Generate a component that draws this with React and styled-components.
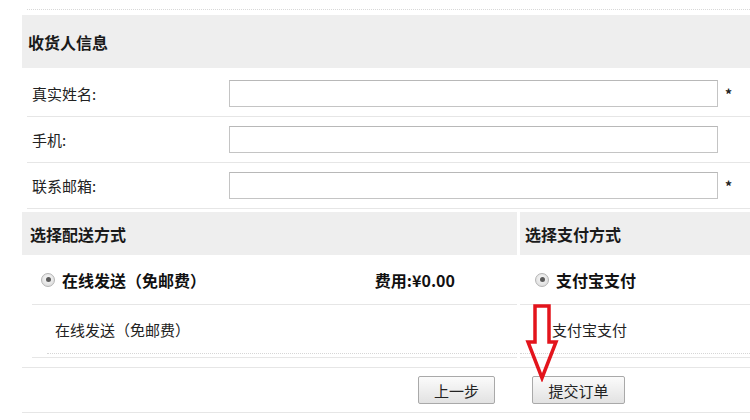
import React from "react"
import styled, { createGlobalStyle } from "styled-components"

const GlobalStyle = createGlobalStyle`
  html, body {
    margin: 0;
    padding: 0;
    background: #fff;
  }
  body {
    font-family: "Noto Sans CJK SC", "Noto Sans", sans-serif;
    color: #222;
    overflow: hidden;
  }
`

function App() {
  const fields = [
    { label: "真实姓名:", required: true },
    { label: "手机:", required: false },
    { label: "联系邮箱:", required: true },
  ]

  return (
    <Page>
      <GlobalStyle />
      <TopRule />
      <SectionHead>收货人信息</SectionHead>
      <Form>
        {fields.map(f => (
          <FormRow key={f.label}>
            <Label>{f.label}</Label>
            <Input type="text" />
            <Star>{f.required ? "*" : ""}</Star>
          </FormRow>
        ))}
      </Form>

      <Choices>
        <Column>
          <SubHead $pad={8}>选择配送方式</SubHead>
          <ColumnBody $indent={10}>
            <OptionRow $pad={9}>
              <Radio />
              <OptionName>在线发送（免邮费）</OptionName>
              <Fee>费用:¥0.00</Fee>
            </OptionRow>
            <DetailRow $indent={15} $pad={8}>在线发送（免邮费）</DetailRow>
          </ColumnBody>
        </Column>
        <Column>
          <SubHead $pad={5}>选择支付方式</SubHead>
          <ColumnBody $indent={0}>
            <OptionRow $pad={15}>
              <Radio />
              <OptionName>支付宝支付</OptionName>
            </OptionRow>
            <DetailRow $indent={0} $pad={32}>支付宝支付</DetailRow>
          </ColumnBody>
        </Column>
      </Choices>

      <Actions>
        <Button $w={77}>上一步</Button>
        <Button $w={93}>提交订单</Button>
      </Actions>

      <Arrow width="36" height="80" viewBox="0 0 36 80">
        <path
          d="M10 4 H24 V40 H31 L17 76 L3 40 H10 Z"
          fill="none"
          stroke="#e3141c"
          strokeWidth="3.5"
          strokeLinejoin="miter"
        />
      </Arrow>
    </Page>
  )
}

export default App

const Page = styled.div`
  position: relative;
  width: 728px;
  height: 420px;
  padding-top: 9px;
  padding-left: 22px;
`

const TopRule = styled.div`
  margin-left: 5px;
  height: 5px;
  border-top: 1px dotted #d8d8d8;
`

const SectionHead = styled.div`
  display: flex;
  align-items: center;
  height: 53px;
  padding-left: 6px;
  background: #eeeeee;
  font-size: 16px;
  font-weight: bold;
  color: #1a1a1a;
`

const Form = styled.div`
  margin-left: 5px;
`

const FormRow = styled.div`
  display: grid;
  grid-template-columns: 202px 489px auto;
  align-items: center;
  height: 45px;
  border-bottom: 1px solid #e6e6e6;

  &:first-child {
    padding-top: 3px;
  }
`

const Label = styled.span`
  padding-left: 5px;
  font-size: 15px;
  color: #222;
`

const Input = styled.input`
  box-sizing: border-box;
  width: 489px;
  height: 27px;
  margin: 0;
  border: 1px solid #c4c4c4;
  border-top-color: #b8b8b8;
  background: #fff;
  outline: none;
`

const Star = styled.span`
  padding-left: 7px;
  font-size: 14px;
  font-weight: bold;
  color: #222;
`

const Choices = styled.div`
  display: grid;
  grid-template-columns: 495px 230px;
  column-gap: 3px;
  margin-top: 3px;
  padding-bottom: 9px;
  border-bottom: 1px solid #e6e6e6;
`

const Column = styled.div`
  display: flex;
  flex-direction: column;
`

const SubHead = styled.div`
  display: flex;
  align-items: center;
  height: 43px;
  padding-left: ${p => p.$pad}px;
  background: #eeeeee;
  font-size: 16px;
  font-weight: bold;
  color: #1a1a1a;
`

const ColumnBody = styled.div`
  margin-left: ${p => p.$indent}px;
  padding-bottom: 3px;
  border-bottom: 1px solid #e6e6e6;
`

const OptionRow = styled.div`
  display: flex;
  align-items: center;
  height: 49px;
  padding-left: ${p => p.$pad}px;
  border-bottom: 1px solid #e6e6e6;
`

const Radio = styled.span`
  box-sizing: border-box;
  position: relative;
  flex: none;
  width: 14px;
  height: 14px;
  margin-right: 7px;
  border-radius: 50%;
  border: 1px solid #b4b4b4;
  background: radial-gradient(circle at 50% 40%, #fafafa, #d6d6d6);

  &::after {
    content: "";
    position: absolute;
    left: 3.5px;
    top: 3.5px;
    width: 5px;
    height: 5px;
    border-radius: 50%;
    background: #5a5a5a;
  }
`

const OptionName = styled.span`
  font-size: 16px;
  font-weight: bold;
  color: #111;
`

const Fee = styled.span`
  margin-left: auto;
  padding-right: 62px;
  font-size: 16px;
  font-weight: bold;
  color: #111;
`

const DetailRow = styled.div`
  display: flex;
  align-items: center;
  height: 48px;
  margin-left: ${p => p.$indent}px;
  padding-left: ${p => p.$pad}px;
  border-bottom: 1px dotted #d6d6d6;
  font-size: 15px;
  color: #222;
`

const Actions = styled.div`
  display: flex;
  align-items: center;
  gap: 37px;
  height: 44px;
  padding-left: 396px;
  border-bottom: 1px solid #e6e6e6;
`

const Button = styled.button`
  box-sizing: border-box;
  width: ${p => p.$w}px;
  height: 28px;
  margin: 0;
  padding: 0;
  border: 1px solid #a9a9a9;
  border-radius: 2px;
  background: linear-gradient(#fbfbfb, #e2e2e2);
  font-family: inherit;
  font-size: 15px;
  color: #222;
`

const Arrow = styled.svg`
  position: absolute;
  left: 525px;
  top: 302px;
`
